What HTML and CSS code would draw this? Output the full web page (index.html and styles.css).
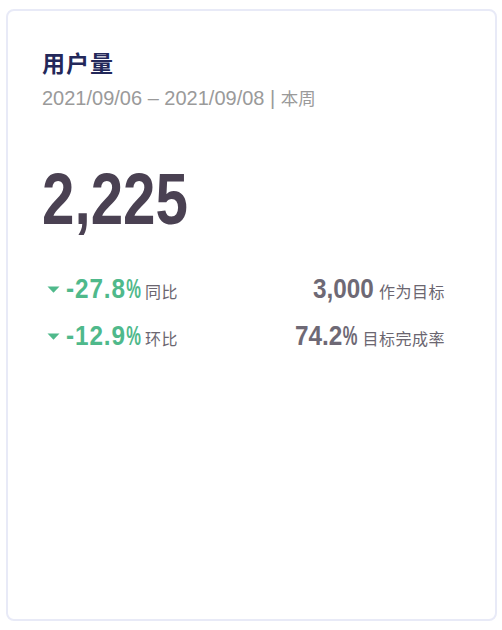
FILE: index.html
```html
<!DOCTYPE html>
<html lang="zh-CN">
<head>
<meta charset="utf-8">
<link rel="stylesheet" href="styles.css">
</head>
<body>
<div class="card">
  <h1 class="title">用户量</h1>
  <div class="range"><span class="latin">2021/09/06 – 2021/09/08 | </span><span class="cjk">本周</span></div>
  <div class="big"><span class="cond-big">2,225</span></div>
  <div class="stats">
    <div class="cell">
      <svg class="tri" width="13" height="7" viewBox="0 0 13 7"><path d="M0.5 0.5 L12.5 0.5 L6.5 6.8 Z" fill="#4fb98b"/></svg>
      <span class="cond pct">-27.8<span class="pc">%</span></span><span class="lbl">同比</span>
    </div>
    <div class="cell right">
      <span class="cond num">3,000</span><span class="lbl">作为目标</span>
    </div>
    <div class="cell">
      <svg class="tri" width="13" height="7" viewBox="0 0 13 7"><path d="M0.5 0.5 L12.5 0.5 L6.5 6.8 Z" fill="#4fb98b"/></svg>
      <span class="cond pct">-12.9<span class="pc">%</span></span><span class="lbl">环比</span>
    </div>
    <div class="cell right">
      <span class="cond num">74.2<span class="pc">%</span></span><span class="lbl">目标完成率</span>
    </div>
  </div>
</div>
</body>
</html>
```
FILE: styles.css
```css
html, body {
  margin: 0;
  padding: 0;
  background: #ffffff;
}
body {
  font-family: "Noto Sans CJK SC", "Noto Sans", sans-serif;
}
.card {
  box-sizing: border-box;
  margin: 9px 0 0 6px;
  width: 491px;
  height: 612px;
  border: 2px solid #e8eaf7;
  border-radius: 8px;
  padding: 36px 50px 0 34px;
}
.title {
  margin: 0;
  font-size: 23px;
  line-height: 30px;
  font-weight: 700;
  color: #23285a;
  letter-spacing: 1px;
}
.range {
  margin-top: 8px;
  font-size: 20px;
  line-height: 24px;
  color: #9a9a9a;
  white-space: nowrap;
}
.range .latin {
  font-family: "Liberation Sans", sans-serif;
}
.range .cjk {
  font-family: "Noto Sans CJK SC", sans-serif;
  font-size: 17.5px;
}
.big {
  margin-top: 53px;
  height: 72px;
  font-family: "Liberation Sans", sans-serif;
  font-weight: 700;
  font-size: 72px;
  line-height: 72px;
  color: #4a4152;
}
.cond-big {
  display: inline-block;
  transform: scaleX(0.81);
  transform-origin: left center;
}
.stats {
  margin-top: 39px;
  display: grid;
  grid-template-columns: 1fr auto;
  row-gap: 17px;
}
.cell {
  display: flex;
  align-items: baseline;
  height: 30px;
}
.cell.right {
  justify-content: flex-end;
}
.tri {
  align-self: center;
  margin: 1px 6px 0 5px;
}
.cond {
  display: inline-block;
  font-family: "Liberation Sans", sans-serif;
  font-weight: 700;
  font-size: 27px;
  line-height: 30px;
  transform: scaleX(0.9);
  transform-origin: left center;
}
.pc {
  display: inline-block;
  transform: scaleX(0.68);
  transform-origin: left center;
  margin-right: -7.5px;
}
.pct {
  color: #4fb98b;
  letter-spacing: 1px;
  margin-right: -9px;
}
.num {
  color: #6e6975;
  margin-right: -6px;
}
.lbl {
  margin-left: 4px;
  font-size: 16px;
  letter-spacing: 0.5px;
  color: #6b6670;
}
```
